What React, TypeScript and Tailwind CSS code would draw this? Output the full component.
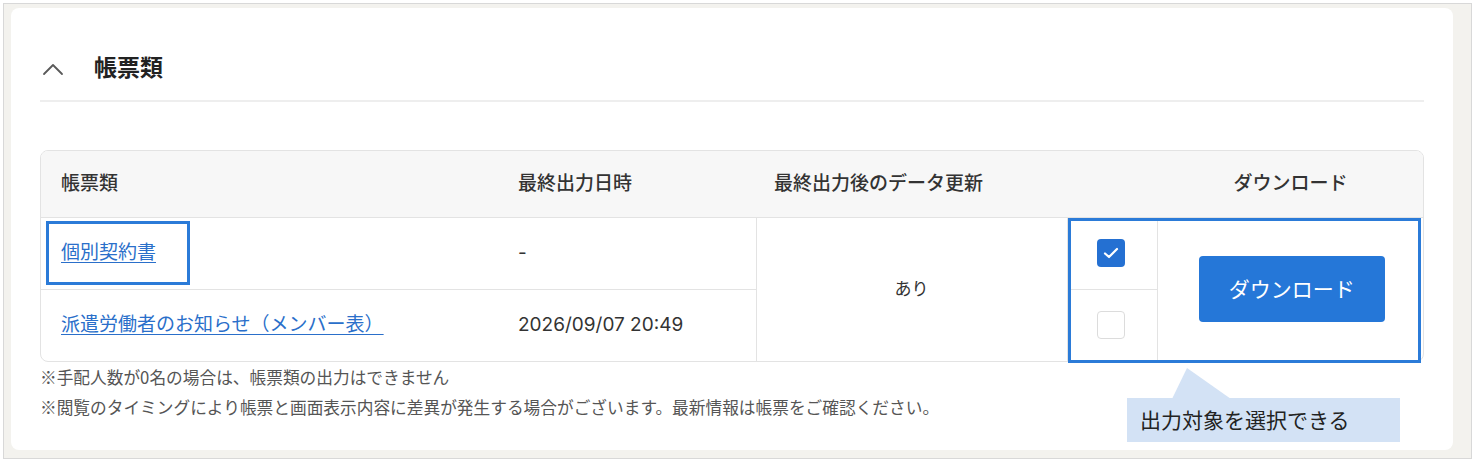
const font = { fontFamily: 'Inter, "Noto Sans CJK JP", "Noto Sans", sans-serif' };
const cjk = { fontFamily: '"Noto Sans CJK JP", "Noto Sans", sans-serif' };

function ChevronUp() {
  return (
    <svg width="22" height="14" viewBox="0 0 22 14" fill="none">
      <polyline points="2,12 11,3 20,12" stroke="#5a5a5a" strokeWidth="1.8" strokeLinecap="round" strokeLinejoin="round" />
    </svg>
  );
}

function Checkbox({ checked }: { checked?: boolean }) {
  if (checked) {
    return (
      <span className="flex h-[28px] w-[28px] items-center justify-center rounded-[4px] bg-[#2470d2]">
        <svg width="16" height="12" viewBox="0 0 16 12" fill="none">
          <polyline points="2,6.5 6,10 14,2" stroke="#fff" strokeWidth="2.2" strokeLinecap="round" strokeLinejoin="round" />
        </svg>
      </span>
    );
  }
  return <span className="block h-[28px] w-[28px] rounded-[4px] border border-[#dcdcdc] bg-white" />;
}

export default function App() {
  return (
    <div className="h-[465px] w-[1477px] bg-white pl-[3px] pt-[3px] text-[#333]" style={font}>
      <div className="h-[456px] w-[1469px] border border-[#d8d8d8] bg-[#f3f2ee] pl-[7px] pt-[4px]">
        <div className="relative h-[442px] w-[1442px] rounded-lg bg-white px-[29px]">
          {/* heading */}
          <div className="flex h-[94px] items-end border-b-2 border-[#eeeeee] pb-[20px]">
            <div className="flex items-center">
              <span className="ml-[2px] mt-[1px]"><ChevronUp /></span>
              <h2 className="ml-[30px] text-[23px] font-bold leading-none text-[#222]">帳票類</h2>
            </div>
          </div>

          {/* table */}
          <div className="relative mt-[48px]">
            <div className="overflow-hidden rounded-lg border border-[#e3e3e3]">
              <table className="w-[1383px] table-fixed border-collapse text-[19px]">
                <colgroup>
                  <col className="w-[458px]" />
                  <col className="w-[257px]" />
                  <col className="w-[311px]" />
                  <col className="w-[90px]" />
                  <col className="w-[267px]" />
                </colgroup>
                <thead>
                  <tr className="h-[66px] border-b border-[#e3e3e3] bg-[#f7f7f7] text-left font-medium">
                    <th className="pl-[20px] font-medium">帳票類</th>
                    <th className="pl-[19px] font-medium">最終出力日時</th>
                    <th className="pl-[18px] font-medium">最終出力後のデータ更新</th>
                    <th />
                    <th className="text-center font-medium">ダウンロード</th>
                  </tr>
                </thead>
                <tbody>
                  <tr className="h-[72px] border-b border-[#e3e3e3]">
                    <td className="pl-[20px]">
                      <a href="#" className="text-[#2a6fca] underline underline-offset-[3px]">個別契約書</a>
                    </td>
                    <td className="pl-[19px]">-</td>
                    <td rowSpan={2} className="border-x border-[#e3e3e3] text-center text-[17px]">あり</td>
                    <td className="border-r border-[#e3e3e3]">
                      <div className="flex justify-center pr-[2px]"><Checkbox checked /></div>
                    </td>
                    <td rowSpan={2} className="text-center">
                      <button className="ml-[2px] h-[66px] w-[186px] rounded-[4px] bg-[#2577d8] text-[21px] text-white">ダウンロード</button>
                    </td>
                  </tr>
                  <tr className="h-[72px]">
                    <td className="pl-[20px]">
                      <a href="#" className="text-[#2a6fca] underline underline-offset-[3px]">派遣労働者のお知らせ（メンバー表）</a>
                    </td>
                    <td className="pl-[19px]">2026/09/07 20:49</td>
                    <td className="border-r border-t border-[#e3e3e3]">
                      <div className="flex justify-center pr-[2px]"><Checkbox /></div>
                    </td>
                  </tr>
                </tbody>
              </table>
            </div>

            {/* annotation boxes */}
            <div className="pointer-events-none absolute left-[6px] top-[71px] h-[64px] w-[144px] border-[3px] border-[#2b7bd8]" />
            <div className="pointer-events-none absolute left-[1028px] top-[68px] h-[145px] w-[353px] border-[3px] border-[#2b7bd8]" />
          </div>

          {/* notes */}
          <div className="text-[16.7px] leading-[30px] text-[#555]" style={cjk}>
            <p>※手配人数が0名の場合は、帳票類の出力はできません</p>
            <p>※閲覧のタイミングにより帳票と画面表示内容に差異が発生する場合がございます。最新情報は帳票をご確認ください。</p>
          </div>

          {/* callout */}
          <div className="absolute left-[1116px] top-[390px] flex h-[44px] w-[273px] items-center bg-[#d3e2f5] pl-[13px] text-[21px] text-[#222]" style={cjk}>
            <svg className="absolute left-[34px] top-[-30px]" width="70" height="31" viewBox="0 0 70 31">
              <polygon points="11,31 26,0 70,31" fill="#d3e2f5" />
            </svg>
            出力対象を選択できる
          </div>
        </div>
      </div>
    </div>
  );
}
